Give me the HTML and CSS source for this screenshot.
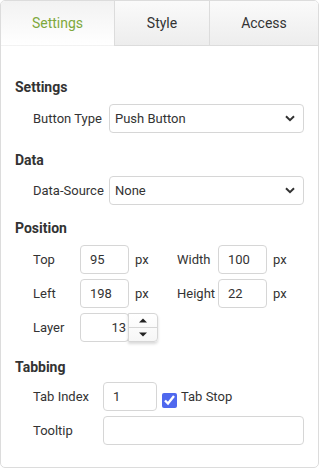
FILE: index.html
```html
<!DOCTYPE html>
<html>
<head>
<meta charset="utf-8">
<link rel="stylesheet" href="styles.css">
</head>
<body>
<div class="panel">
  <div class="tabs">
    <div class="tab active">Settings</div>
    <div class="tab">Style</div>
    <div class="tab">Access</div>
  </div>
  <div class="content">
    <section class="sec">
      <h3>Settings</h3>
      <div class="form form-wide">
        <label>Button Type</label>
        <div class="select"><span>Push Button</span><svg width="10" height="7" viewBox="0 0 10 7"><path d="M1 1.2 L5 5.2 L9 1.2" fill="none" stroke="#333" stroke-width="2"/></svg></div>
      </div>
    </section>
    <section class="sec sec-data">
      <h3>Data</h3>
      <div class="form form-wide">
        <label>Data-Source</label>
        <div class="select"><span>None</span><svg width="10" height="7" viewBox="0 0 10 7"><path d="M1 1.2 L5 5.2 L9 1.2" fill="none" stroke="#333" stroke-width="2"/></svg></div>
      </div>
    </section>
    <section class="sec">
      <h3>Position</h3>
      <div class="form form-pos">
        <label>Top</label>
        <input class="field num" value="95">
        <span class="unit">px</span>
        <label>Width</label>
        <input class="field num" value="100">
        <span class="unit">px</span>

        <label>Left</label>
        <input class="field num" value="198">
        <span class="unit">px</span>
        <label>Height</label>
        <input class="field num" value="22">
        <span class="unit">px</span>

        <label>Layer</label>
        <div class="spin">
          <input class="field num right" value="13">
          <div class="spin-btns">
            <div class="spin-btn"><svg width="8" height="5" viewBox="0 0 8 5"><path d="M0 4.5 L4 0.5 L8 4.5 Z" fill="#222"/></svg></div>
            <div class="spin-btn down"><svg width="8" height="5" viewBox="0 0 8 5"><path d="M0 0.5 L4 4.5 L8 0.5 Z" fill="#222"/></svg></div>
          </div>
        </div>
      </div>
    </section>
    <section class="sec sec-tab">
      <h3>Tabbing</h3>
      <div class="form form-tab">
        <label>Tab Index</label>
        <input class="field num idx" value="1">
        <label class="check"><input type="checkbox" checked><span>Tab Stop</span></label>

        <label>Tooltip</label>
        <input class="field tip" value="">
      </div>
    </section>
  </div>
</div>
</body>
</html>
```
FILE: styles.css
```css
* { box-sizing: border-box; }
body {
  margin: 0;
  font-family: Roboto, "Liberation Sans", sans-serif;
  font-size: 13px;
  color: #333;
  background: #fff;
}
.panel {
  width: 319px;
  height: 468px;
  border: 1px solid #dcdcdc;
  border-radius: 5px;
  overflow: hidden;
  background: #fff;
}
.tabs {
  display: grid;
  grid-template-columns: 113px 95px 1fr;
  height: 45px;
}
.tab {
  display: flex;
  align-items: center;
  justify-content: center;
  font-size: 14px;
  color: #333;
  background: linear-gradient(#fafafa, #ededed);
  border-left: 1px solid #dcdcdc;
  border-bottom: 1px solid #dcdcdc;
}
.tab.active {
  border-left: 0;
  border-bottom-color: transparent;
  background: linear-gradient(#f2f2f2, #fff);
  color: #7ea83c;
}
.content {
  padding: 31px 14px 0;
}
.sec + .sec { margin-top: 13px; }
.sec.sec-data { margin-top: 17px; }
.sec.sec-tab { margin-top: 15px; }
h3 {
  margin: 0 0 7px;
  font-size: 14px;
  line-height: 20px;
  font-weight: 700;
  color: #333;
}
.sec-data h3 { margin-bottom: 6px; }
.sec-tab h3 { margin-bottom: 5px; }
.form {
  display: grid;
  padding-left: 18px;
  row-gap: 5px;
  align-items: center;
}
.form-wide { grid-template-columns: 76px 1fr; }
.form-pos { grid-template-columns: 47px 49px 48px 41px 49px 1fr; }
.form-tab { grid-template-columns: 70px 54px 1fr; }
.field {
  height: 29px;
  border: 1px solid #d6d6d6;
  border-radius: 4px;
  background: #fff;
  font-family: inherit;
  font-size: 13px;
  color: #333;
  padding: 0 9px;
  margin: 0;
  width: 100%;
  outline: none;
}
.select {
  height: 29px;
  border: 1px solid #d6d6d6;
  border-radius: 4px;
  display: flex;
  align-items: center;
  justify-content: space-between;
  padding: 0 8px 0 5px;
}
.select svg { display: block; }
.unit { padding-left: 6px; }
.spin {
  display: flex;
  width: 78px;
}
.spin .field { width: 49px; flex: none; }
.right { text-align: right; padding-right: 2px; }
.spin-btns {
  width: 30px;
  height: 29px;
  margin-left: -1px;
  border: 1px solid #d6d6d6;
  border-radius: 0 4px 4px 0;
  box-shadow: 0 2px 3px rgba(0,0,0,0.15);
  display: flex;
  flex-direction: column;
  background: linear-gradient(#fff, #f6f6f6);
}
.spin-btn {
  flex: 1;
  display: flex;
  align-items: center;
  justify-content: center;
}
.spin-btn svg { display: block; }
.spin-btn.down { border-top: 1px solid #d6d6d6; }
.check {
  display: flex;
  align-items: center;
}
.check input {
  width: 15px;
  height: 15px;
  margin: 7px 4px 0 5px;
  accent-color: #4f68ee;
}
.tip { grid-column: 2 / span 2; }
```
